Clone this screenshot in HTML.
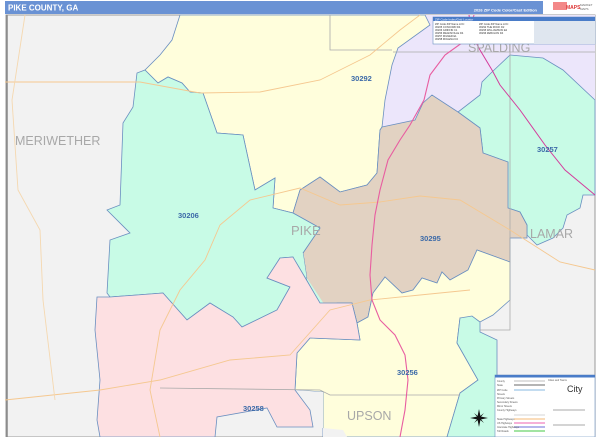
<!DOCTYPE html>
<html><head><meta charset="utf-8"><style>
html,body{margin:0;padding:0;background:#fff;width:600px;height:437px;overflow:hidden;font-family:"Liberation Sans",sans-serif}
</style></head><body>
<svg width="600" height="437" viewBox="0 0 600 437" xmlns="http://www.w3.org/2000/svg" style="position:absolute;left:0;top:0">
<rect x="0" y="0" width="600" height="437" fill="#fff"/>
<!-- header -->
<rect x="5" y="1" width="538" height="13" fill="#6a92d4"/>
<text x="8" y="10.5" font-size="8" font-weight="bold" fill="#fff">PIKE COUNTY, GA</text>
<text x="537" y="11.5" font-size="4" font-weight="bold" fill="#fff" text-anchor="end">2026 ZIP Code Color/Cast Edition</text>
<rect x="553" y="2" width="14" height="8" fill="#e55" opacity="0.7"/>
<text x="566" y="9" font-size="5" font-weight="bold" fill="#d33">MAPS</text>
<text x="580" y="6" font-size="3" fill="#666">MARKET</text>
<text x="580" y="10" font-size="3" fill="#666">MAPS</text>
<!-- map -->
<rect x="6" y="15" width="589" height="422" fill="#f2f2f2" stroke="#999" stroke-width="1"/>
<line x1="7" y1="15" x2="7" y2="437" stroke="#888" stroke-width="1.5"/>
<!-- purple spalding -->
<polygon points="420,15 595,15 595,100 563,70 543,58 510,55 492,72 482,82 480,95 458,112 432,95 423,103 415,120 382,127 385,100 392,65 398,48 430,25" fill="#ece6fb"/>
<!-- green 30257 -->
<polygon points="510,55 543,58 563,70 595,100 595,195 583,195 580,208 567,215 563,228 553,238 537,245 527,235 527,225 520,212 508,208 508,162 483,153 480,128 458,112 480,95 482,82 492,72" fill="#c8fbe6" stroke="#6a8fc0" stroke-width="0.8"/>
<!-- yellow 30292 -->
<polygon points="180,15 425,15 430,25 398,48 392,65 385,100 382,127 380,130 377,173 367,185 340,192 320,177 300,190 293,213 273,208 275,178 255,190 243,135 217,133 203,93 190,92 182,83 168,77 158,83 145,70 160,55 172,40" fill="#fffedc" stroke="#6a8fc0" stroke-width="0.8"/>
<!-- brown 30295 -->
<polygon points="382,127 415,120 423,103 432,95 458,112 480,128 483,153 508,162 508,208 520,212 527,225 527,238 510,238 510,262 477,250 468,270 450,280 442,272 437,283 422,278 413,290 402,293 385,277 373,293 368,317 357,323 352,303 337,303 330,313 320,303 307,280 303,253 320,228 293,213 300,190 320,177 340,192 367,185 377,173 380,130" fill="#e2d2c2" stroke="#6a8fc0" stroke-width="0.8"/>
<!-- green 30206 -->
<polygon points="145,70 158,83 168,77 182,83 190,92 203,93 217,133 243,135 255,190 275,178 273,208 293,213 320,228 303,253 307,280 320,303 330,313 320,303 293,257 280,258 267,278 290,287 277,310 242,327 233,317 210,303 187,320 163,293 110,297 107,293 110,240 130,233 107,210 120,205 123,123 133,107 137,73" fill="#c8fbe6" stroke="#6a8fc0" stroke-width="0.8"/>
<polygon points="320,303 307,280 303,253 293,257 330,313" fill="#c8fbe6"/>
<!-- yellow 30256 + upson -->
<polygon points="510,262 510,300 493,315 480,322 460,318 457,343 478,380 460,393 447,437 323,437 323,392 295,390 297,353 310,338 360,340 357,323 368,317 373,293 385,277 402,293 413,290 422,278 437,283 442,272 450,280 468,270 477,250" fill="#fffedc" stroke="#6a8fc0" stroke-width="0.8"/>
<polygon points="323,392 295,390 310,410 313,427 343,430 347,437 323,437" fill="#f2f2f2"/>
<!-- green strip right bottom -->
<polygon points="460,318 472,316 480,322 480,332 497,340 497,437 447,437 460,393 478,380 457,343" fill="#c8fbe6" stroke="#6a8fc0" stroke-width="0.8"/>
<!-- pink 30258 -->
<polygon points="97,297 110,297 163,293 187,320 210,303 233,317 242,327 277,310 290,287 267,278 280,258 293,257 320,303 337,303 352,303 357,323 360,340 310,338 297,353 295,390 310,410 313,427 277,427 267,408 217,417 215,437 100,437 97,420 100,380 95,330" fill="#fde0e2" stroke="#6a8fc0" stroke-width="0.8"/>
<!-- county lines -->
<polyline points="330,15 330,50 392,50" fill="none" stroke="#aaa" stroke-width="0.8"/>
<polyline points="393,52 595,52" fill="none" stroke="#aaa" stroke-width="0.8"/>
<polyline points="510,52 510,330 480,330" fill="none" stroke="#aaa" stroke-width="0.8"/>
<polyline points="160,388 320,390 330,395 460,395" fill="none" stroke="#aaa" stroke-width="0.8"/>
<!-- roads -->
<polyline points="5,82 140,82 200,93 260,92 320,80 370,55 400,30 420,15" fill="none" stroke="#f5c890" stroke-width="0.9"/>
<polyline points="220,225 250,200 300,188 340,205 380,202 420,196 460,200 510,230 560,262 595,270" fill="none" stroke="#f5c890" stroke-width="0.9"/>
<polyline points="220,225 205,260 180,290 160,330 150,390 160,437" fill="none" stroke="#f5c890" stroke-width="0.9"/>
<polyline points="5,400 100,390 160,380 230,360 290,355 330,310 370,300 420,295 470,290" fill="none" stroke="#f5c890" stroke-width="0.9"/>
<polyline points="25,15 12,100 18,190 40,230 43,300 55,400" fill="none" stroke="#f5d8b0" stroke-width="0.9"/>
<polyline points="474,15 466,40 445,55 430,75 424,100 410,125 400,140 388,160 380,190 375,215 372,245 370,275 372,300 380,320 395,335 405,355 408,380 405,410 400,437" fill="none" stroke="#e85da0" stroke-width="1.1"/>
<polyline points="469,15 472,35 480,50 492,70 500,85 520,110 545,145 565,170 595,195" fill="none" stroke="#d43c9c" stroke-width="1"/>
<!-- labels -->
<g font-family="Liberation Sans,sans-serif" fill="#a8a8a8">
<text x="15" y="145" font-size="12.5">MERIWETHER</text>
<text x="468" y="52" font-size="12.5">SPALDING</text>
<text x="291" y="235" font-size="13">PIKE</text>
<text x="530" y="238" font-size="12.5">LAMAR</text>
<text x="347" y="420" font-size="12.5">UPSON</text>
</g>
<g font-family="Liberation Sans,sans-serif" fill="#3c6aa8" font-size="7.5" font-weight="bold">
<text x="351" y="81">30292</text>
<text x="178" y="218">30206</text>
<text x="420" y="241">30295</text>
<text x="537" y="152">30257</text>
<text x="397" y="375">30256</text>
<text x="243" y="411">30258</text>
</g>
<!-- zip index box -->
<rect x="433" y="17" width="162" height="27" fill="#fff" stroke="#6a8fc0" stroke-width="0.6"/>
<rect x="433" y="17" width="162" height="4" fill="#4a7cc8"/>
<rect x="534" y="21" width="61" height="23" fill="#dfe6ef"/>
<text x="435" y="20.5" font-size="3" fill="#fff">ZIP Code Index/Grid Locator</text>
<g font-size="2.6" fill="#333">
<text x="435" y="25">ZIP Code  ZIP Name       LOC</text>
<text x="435" y="28">30205  CONCORD     D4</text>
<text x="435" y="31">30206  GRIFFIN       C1</text>
<text x="435" y="34">30256  MEANSVILLE  D4</text>
<text x="435" y="37">30257  MILNER        E1</text>
<text x="435" y="40">30258  MOLENA       D4</text>
<text x="479" y="25">ZIP Code  ZIP Name      LOC</text>
<text x="479" y="28">30292  THE ROCK      D2</text>
<text x="479" y="31">30295  WILLIAMSON  E2</text>
<text x="479" y="34">30296  ZEBULON       D4</text>
</g>
<!-- legend -->
<rect x="495" y="375" width="100" height="62" fill="#fff" stroke="#6a8fc0" stroke-width="0.6"/>
<rect x="495" y="375" width="100" height="2.5" fill="#4a7cc8"/>
<g stroke-width="1.2">
<line x1="514" y1="381" x2="545" y2="381" stroke="#ccc"/>
<line x1="514" y1="385" x2="545" y2="385" stroke="#888"/>
<line x1="514" y1="390" x2="545" y2="390" stroke="#9fc8e8"/>
<line x1="514" y1="415" x2="545" y2="415" stroke="#ddd"/>
<line x1="514" y1="419" x2="545" y2="419" stroke="#f7c890"/>
<line x1="514" y1="423" x2="545" y2="423" stroke="#f080c0"/>
<line x1="514" y1="427" x2="545" y2="427" stroke="#8a8ae0"/>
<line x1="514" y1="431" x2="545" y2="431" stroke="#6bd46b"/>
</g>
<g font-size="2.5" fill="#555">
<text x="497" y="382">County</text><text x="497" y="386">State</text><text x="497" y="391">ZIP Code</text>
<text x="497" y="395">Streets</text><text x="497" y="399">Primary Streets</text><text x="497" y="403">Secondary Streets</text>
<text x="497" y="407">Minor Streets</text><text x="497" y="411">County Highways</text><text x="497" y="420">State Highways</text>
<text x="497" y="424">US Highways</text><text x="497" y="428">Interstate Highways</text><text x="497" y="432">Toll Roads</text>
<text x="548" y="381">Cities and Towns</text>
</g>
<text x="567" y="392" font-size="9" fill="#333">City</text>
<line x1="553" y1="410" x2="585" y2="410" stroke="#555" stroke-width="0.5"/>
<line x1="553" y1="425" x2="585" y2="425" stroke="#555" stroke-width="0.5"/>
<!-- compass -->
<g transform="translate(479,418)" fill="#111">
<polygon points="0,-9 1.5,-1.5 0,0 -1.5,-1.5"/>
<polygon points="0,9 1.5,1.5 0,0 -1.5,1.5"/>
<polygon points="-9,0 -1.5,1.5 0,0 -1.5,-1.5"/>
<polygon points="9,0 1.5,1.5 0,0 1.5,-1.5"/>
<polygon points="-5,-5 0,-1 1,0 -1,0" /><polygon points="5,5 0,1 -1,0 1,0"/>
<polygon points="5,-5 1,0 0,1 0,-1"/><polygon points="-5,5 -1,0 0,-1 0,1"/>
</g>
</svg>
</body></html>
